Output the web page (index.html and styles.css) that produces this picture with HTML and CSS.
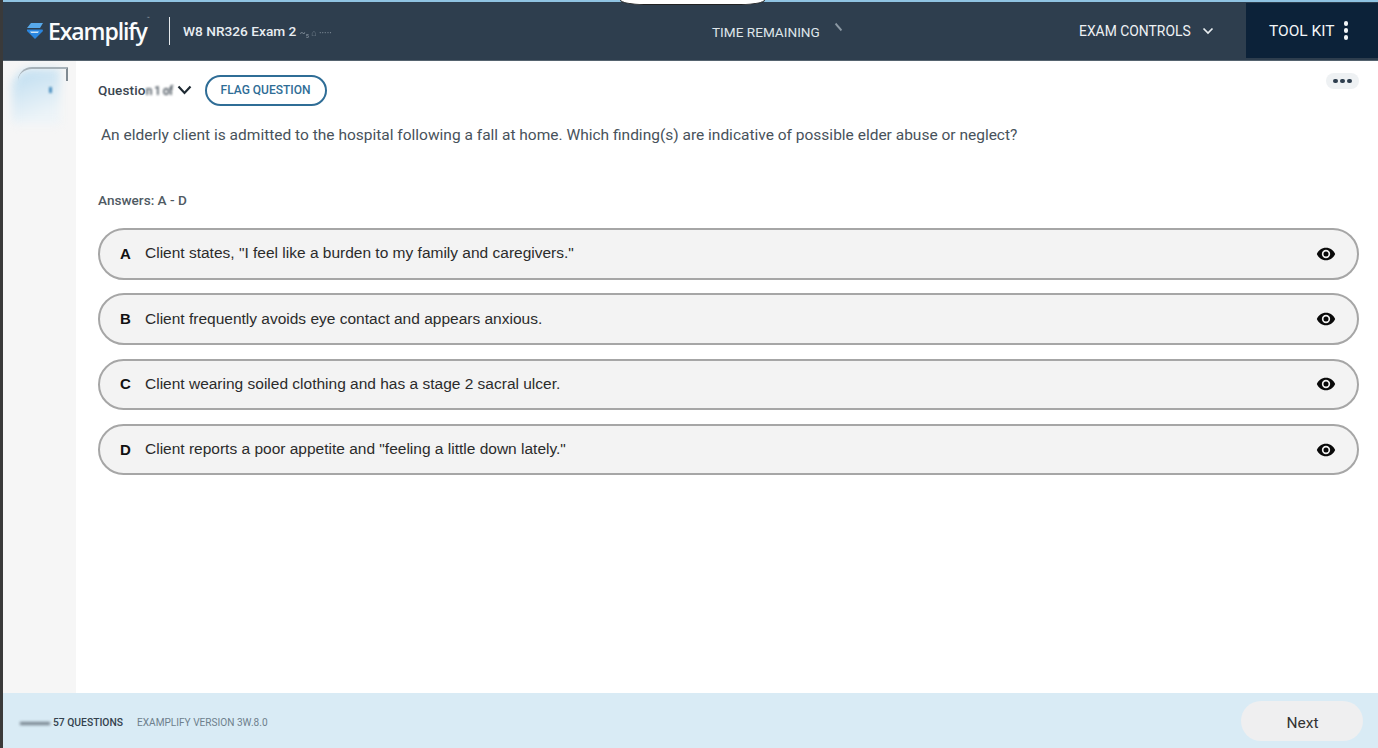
FILE: index.html
```html
<!DOCTYPE html>
<html lang="en">
<head>
<meta charset="utf-8">
<title>Examplify</title>
<link rel="stylesheet" href="styles.css">
</head>
<body>
<div class="frame">
  <div class="edge"></div>
  <div class="app">
    <header class="header">
      <div class="notch"></div>
      <div class="brand">
        <svg class="logo" width="18" height="18" viewBox="0 0 18 18"><path d="M5 1h12l-3 5H1z" fill="#58a9ea"/><path d="M1 7.500h15.500L17 9l-8 8-8-8z" fill="#2a86df"/><path d="M4 9.500h9l-1.200 1.500H5.200z" fill="#cfe5f7"/></svg>
        <span class="brand-name">Examplify</span><span class="tm">™</span>
      </div>
      <div class="divider"></div>
      <div class="exam-title">W8 NR326 Exam 2 <span class="smudge">~₅ ⌂ ·····</span></div>
      <div class="time">TIME REMAINING<span class="tick"></span></div>
      <div class="controls">EXAM CONTROLS
        <svg width="12" height="8" viewBox="0 0 12 8"><path d="M1.5 1.5 6 6l4.5-4.5" fill="none" stroke="#e8edf0" stroke-width="1.7"/></svg>
      </div>
      <div class="toolkit">TOOL KIT
        <span class="kebab"><i></i><i></i><i></i></span>
      </div>
    </header>
    <div class="body">
      <aside class="sidebar"><div class="thumb"></div><div class="thumb-line"></div><div class="thumb-dot"></div></aside>
      <main class="main">
        <div class="qbar">
          <span class="qlabel">Questio<span class="blurred">n 1 of</span></span>
          <svg class="qchev" width="15" height="10" viewBox="0 0 15 10"><path d="M1.5 1.5 7.5 8l6-6.500" fill="none" stroke="#1f2a33" stroke-width="2.2"/></svg>
          <button class="flag">FLAG QUESTION</button>
          <div class="more"><i></i><i></i><i></i></div>
        </div>
        <p class="question">An elderly client is admitted to the hospital following a fall at home. Which finding(s) are indicative of possible elder abuse or neglect?</p>
        <div class="range">Answers: A - D</div>
        <div class="answers">
          <div class="answer"><b>A</b><span class="atext">Client states, "I feel like a burden to my family and caregivers."</span><svg class="eye" viewBox="0 0 24 24"><path d="M12 4.5C7 4.500 2.730 7.610 1 12c1.730 4.390 6 7.500 11 7.500s9.270-3.110 11-7.500c-1.730-4.390-6-7.500-11-7.500zM12 17a5 5 0 1 1 0-10 5 5 0 0 1 0 10zm0-8a3 3 0 1 0 0 6 3 3 0 0 0 0-6z"/></svg></div>
          <div class="answer"><b>B</b><span class="atext">Client frequently avoids eye contact and appears anxious.</span><svg class="eye" viewBox="0 0 24 24"><path d="M12 4.5C7 4.500 2.730 7.610 1 12c1.730 4.390 6 7.500 11 7.500s9.270-3.110 11-7.500c-1.730-4.390-6-7.500-11-7.500zM12 17a5 5 0 1 1 0-10 5 5 0 0 1 0 10zm0-8a3 3 0 1 0 0 6 3 3 0 0 0 0-6z"/></svg></div>
          <div class="answer"><b>C</b><span class="atext">Client wearing soiled clothing and has a stage 2 sacral ulcer.</span><svg class="eye" viewBox="0 0 24 24"><path d="M12 4.5C7 4.500 2.730 7.610 1 12c1.730 4.390 6 7.500 11 7.500s9.270-3.110 11-7.500c-1.730-4.390-6-7.500-11-7.500zM12 17a5 5 0 1 1 0-10 5 5 0 0 1 0 10zm0-8a3 3 0 1 0 0 6 3 3 0 0 0 0-6z"/></svg></div>
          <div class="answer"><b>D</b><span class="atext">Client reports a poor appetite and "feeling a little down lately."</span><svg class="eye" viewBox="0 0 24 24"><path d="M12 4.5C7 4.500 2.730 7.610 1 12c1.730 4.390 6 7.500 11 7.500s9.270-3.110 11-7.500c-1.730-4.390-6-7.500-11-7.500zM12 17a5 5 0 1 1 0-10 5 5 0 0 1 0 10zm0-8a3 3 0 1 0 0 6 3 3 0 0 0 0-6z"/></svg></div>
        </div>
      </main>
    </div>
    <footer class="footer">
      <span class="foot-blur"></span>
      <span class="count">57 QUESTIONS</span>
      <span class="version">EXAMPLIFY VERSION 3W.8.0</span>
      <button class="next">Next</button>
    </footer>
  </div>
</div>
</body>
</html>
```
FILE: styles.css
```css
* { box-sizing: border-box; }
html, body { margin: 0; height: 100%; overflow: hidden; }
body { font-family: Roboto, "Liberation Sans", sans-serif; background: #fff; }
.frame { display: flex; width: 1378px; height: 748px; }
.edge { width: 3px; background: #3a3a3a; }
.app { flex: 1; display: flex; flex-direction: column; min-width: 0; }

.header {
  position: relative; height: 61px; flex: none; display: flex; align-items: center;
  background: #2e3e4e; border-top: 2px solid #8fc3e2; color: #f1f4f6;
  border-bottom: 1px solid #55636f;
}
.notch {
  position: absolute; left: 617px; top: -2px; width: 145px; height: 5px;
  background: #fff; border: 1px solid #222; border-top: 0; border-radius: 0 0 24px 24px / 0 0 5px 5px;
}
.brand { display: flex; align-items: center; margin-left: 23px; width: 143px; }
.logo { flex: none; }
.brand-name { font-size: 23px; font-weight: 600; letter-spacing: -1.08px; margin-left: 4px; color: #fbfcfd; font-family: "Open Sans", Roboto, sans-serif; }
.tm { font-size: 5px; align-self: flex-start; color: #aab4bc; }
.divider { width: 1px; height: 28px; background: #e5e9ec; }
.exam-title { margin-left: 13px; font-size: 13.7px; font-weight: 500; width: 386px; color: #e8edf1; white-space: nowrap; }
.smudge { font-size: 9px; color: #7d8a96; filter: blur(0.5px); }
.time { position: absolute; left: 709px; top: 22px; font-size: 13.6px; color: #dfe5ea; white-space: nowrap; }
.tick { position: absolute; left: 122px; top: 2px; width: 9px; height: 2px; background: #8b98a3; transform: rotate(50deg); filter: blur(0.6px); }
.controls { position: absolute; left: 1076px; top: 21px; display: flex; align-items: center; gap: 11px; font-size: 13.9px; font-weight: 400; color: #eef1f4; white-space: nowrap; }
.toolkit {
  position: absolute; right: 0; top: 1px; width: 132px; height: 55px; background: #0c2239;
  display: flex; align-items: center; padding-left: 23px; gap: 9px; font-size: 15.5px; font-weight: 400; color: #f2f5f7;
}
.kebab { display: flex; flex-direction: column; gap: 2.500px; }
.kebab i { display: block; width: 4.500px; height: 4.500px; border-radius: 50%; background: #f2f5f7; }

.body { flex: 1; display: flex; min-height: 0; }
.sidebar { position: relative; width: 73px; flex: none; background: #f6f6f6; overflow: hidden; }
.thumb { position: absolute; left: 9px; top: 8px; width: 48px; height: 55px; border-radius: 20px 0 0 0; background: linear-gradient(160deg, #bcdcf0, #edf4f8 80%); filter: blur(4px); }
.thumb-line { position: absolute; left: 15px; top: 6px; width: 50px; height: 14px; border-top: 2px solid #a6b1b8; border-right: 2px solid #7f8a92; border-radius: 14px 0 0 0; filter: blur(0.7px); }
.thumb-dot { position: absolute; left: 46px; top: 26px; width: 3px; height: 6px; background: #4d90c0; filter: blur(1px); }
.main { flex: 1; min-width: 0; padding: 14px 19px 0 22px; background: #fff; }
.qbar { position: relative; display: flex; align-items: center; height: 30px; }
.qlabel { font-size: 13.5px; font-weight: 500; letter-spacing: 0.15px; color: #3b4650; white-space: nowrap; }
.blurred { filter: blur(0.8px); font-size: 12px; letter-spacing: -0.6px; }
.qchev { margin-left: 4px; }
.flag {
  margin-left: 13px; height: 31px; width: 122px; padding: 0; background: #fff;
  border: 2px solid #2f6d96; border-radius: 16px; color: #2f6d96;
  font: 500 12px Roboto, sans-serif;
}
.more {
  position: absolute; right: 0; top: -2px; width: 33px; height: 16px; border-radius: 8px;
  background: #eef1f3; display: flex; align-items: center; justify-content: center; gap: 2.500px;
}
.more i { width: 4.500px; height: 4.500px; border-radius: 50%; background: #2e3e4e; }
.question { margin: 20px 0 0 3px; font-size: 15.5px; line-height: 20px; color: #48525b; white-space: nowrap; }
.range { margin-top: 47px; font-size: 13.6px; font-weight: 500; line-height: 17px; color: #4f5a63; }
.answers { margin-top: 19px; display: flex; flex-direction: column; gap: 13.83px; }
.answer {
  display: flex; align-items: center; height: 51.5px; padding: 0 21px 0 20px;
  background: #f3f3f3; border: 2px solid #a6a6a6; border-radius: 26px;
  font-family: "Liberation Sans", Arial, sans-serif; font-size: 15.5px; color: #2b2b2b;
}
.answer b { width: 25px; flex: none; color: #111; font-size: 15px; padding-bottom: 1px; }
.atext { flex: 1; padding-bottom: 1px; }
.eye { width: 20px; height: 20px; fill: #0a0a0a; flex: none; }

.footer { position: relative; height: 55px; flex: none; display: flex; align-items: center; background: #d9ebf5; padding-left: 50px; padding-top: 3px; }
.foot-blur { position: absolute; left: 17px; top: 29px; width: 30px; height: 3px; background: #6f7c87; filter: blur(1.500px); }
.count { font-size: 10.3px; font-weight: 500; color: #34424e; white-space: nowrap; }
.version { margin-left: 14px; font-size: 10.1px; color: #6e7f8c; white-space: nowrap; }
.next {
  margin-left: auto; margin-right: 15px; margin-top: -3px; width: 122px; height: 40px; padding: 4px 0 0 1px; border: 0; border-radius: 20px;
  background: #efeff0; color: #333; font: 400 15.5px Roboto, sans-serif;
}
```
